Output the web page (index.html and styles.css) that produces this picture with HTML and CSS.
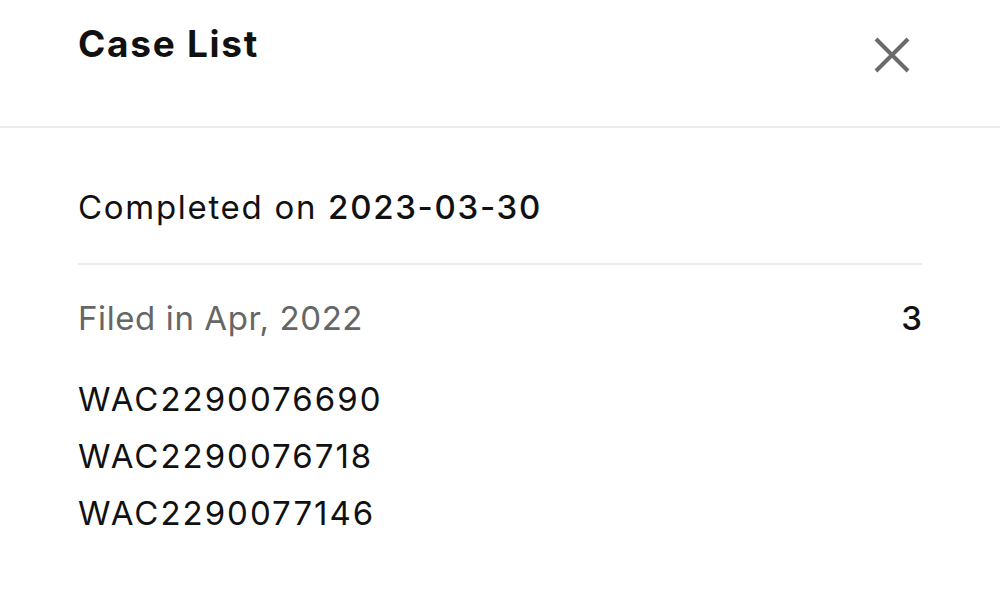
FILE: index.html
```html
<!DOCTYPE html>
<html lang="en">
<head>
<meta charset="utf-8">
<title>Case List</title>
<link rel="stylesheet" href="styles.css">
</head>
<body>
<div class="sheet">
  <header class="sheet-header">
    <h1 class="sheet-title">Case List</h1>
    <button class="close-btn" aria-label="Close">
      <svg width="36" height="36" viewBox="0 0 36 36"><path d="M2 2 L34 34 M34 2 L2 34" stroke="#6a6a6a" stroke-width="4" fill="none"/></svg>
    </button>
  </header>
  <main class="sheet-body">
    <div class="completed">Completed on <strong>2023-03-30</strong></div>
    <div class="group-head">
      <span class="group-label">Filed in Apr, 2022</span>
      <span class="group-count">3</span>
    </div>
    <ul class="case-list">
      <li>WAC2290076690</li>
      <li>WAC2290076718</li>
      <li>WAC2290077146</li>
    </ul>
  </main>
</div>
</body>
</html>
```

FILE: styles.css
```css
html, body {
  margin: 0;
  padding: 0;
  background: #ffffff;
}
body {
  font-family: Inter, "Liberation Sans", sans-serif;
  color: #111111;
  width: 1000px;
  height: 589px;
  overflow: hidden;
}
.sheet-header {
  height: 126px;
  border-bottom: 2px solid #ececec;
  display: flex;
  justify-content: space-between;
  align-items: flex-start;
  padding: 0 90px 0 78px;
}
.sheet-title {
  margin: 0;
  padding-top: 22px;
  font-size: 37px;
  line-height: 44px;
  font-weight: 700;
  letter-spacing: 1.7px;
  color: #111;
}
.close-btn {
  border: 0;
  background: none;
  padding: 0;
  margin-top: 37px;
  width: 36px;
  height: 36px;
  display: flex;
}
.sheet-body {
  padding: 0 78px;
}
.completed {
  font-size: 33px;
  line-height: 40px;
  letter-spacing: 1.7px;
  padding: 59px 0 36px;
  border-bottom: 2px solid #ececec;
  color: #111;
}
.completed strong {
  font-weight: 500;
}
.group-head {
  display: flex;
  justify-content: space-between;
  font-size: 33px;
  line-height: 40px;
  margin-top: 33px;
}
.group-label {
  color: #666666;
  letter-spacing: 0.6px;
}
.group-count {
  color: #111;
  font-weight: 500;
}
.case-list {
  list-style: none;
  margin: 33px 0 0;
  padding: 0;
  font-size: 33px;
  line-height: 57px;
  letter-spacing: 2px;
}
```
